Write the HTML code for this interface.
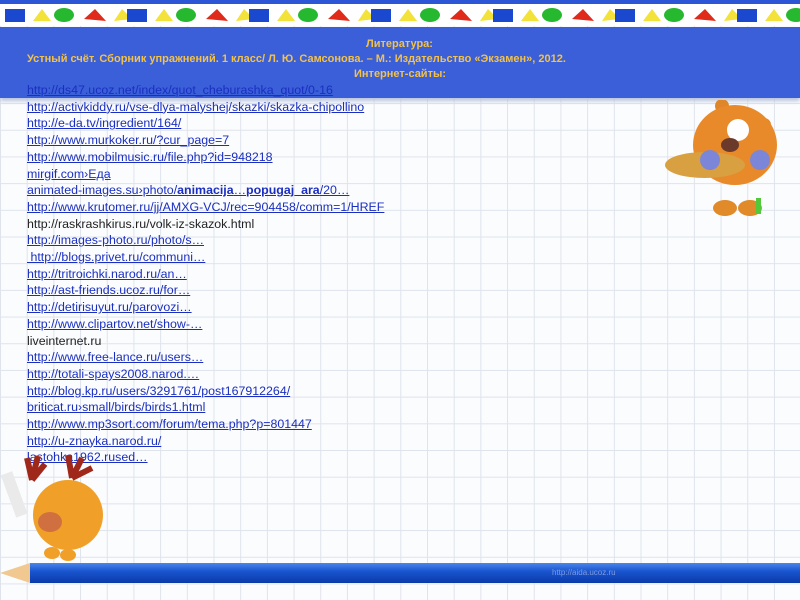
<!DOCTYPE html>
<html><head><meta charset="utf-8"><style>
body{margin:0;width:800px;height:600px;overflow:hidden;position:relative;font-family:"Liberation Sans",sans-serif;
background-color:#fbfcfe;
background-image:linear-gradient(to right,#dfe3ec 1px,transparent 1px),linear-gradient(to bottom,#dfe3ec 1px,transparent 1px);
background-size:26.7px 26.7px;background-position:0 23px;}
.top{position:absolute;left:0;top:0;width:800px;height:4px;background:#2c56d6}
.band{position:absolute;left:0;top:4px;width:800px;height:22px;background:#fff}
.hdr{position:absolute;left:0;top:27px;width:800px;height:71px;background:#3a5fd9;box-shadow:0 3px 4px #b8c3dc}
.t{position:absolute;color:#f2c24a;font-weight:bold;font-size:11px;font-family:"Liberation Sans Narrow","Liberation Sans",sans-serif;white-space:nowrap}
.links{position:absolute;left:27px;top:82px;font-size:12.4px;line-height:16.7px;color:#1a2fc0;white-space:nowrap}
.links div{text-decoration:underline}
.links .p{text-decoration:none;color:#222}
.pencil{position:absolute;left:30px;top:563px;width:770px;height:20px;background:linear-gradient(#4a86ea,#1a56d0 40%,#0a3aa8);}
.tip{position:absolute;left:0;top:563px;width:0;height:0;border-top:10px solid transparent;border-bottom:10px solid transparent;border-right:30px solid #f0c890}
</style></head><body>
<div class="top"></div>
<div class="band">
<svg width="800" height="22">
<g id="s">
<rect x="5" y="5" width="20" height="13" fill="#1a49d0"/>
<polygon points="33,17 42,5 51,17" fill="#f2e23a"/>
<ellipse cx="64" cy="11" rx="10" ry="7" fill="#26b82e"/>
<polygon points="84,15 95,5 106,17" fill="#e02a1a"/>
<polygon points="114,17 122,5 132,15" fill="#f2e23a"/>
</g>
<use href="#s" x="122"/><use href="#s" x="244"/><use href="#s" x="366"/><use href="#s" x="488"/><use href="#s" x="610"/><use href="#s" x="732"/>
</svg></div>
<div class="hdr"></div>
<div class="t" style="left:366px;top:38px">Литература:</div>
<div class="t" style="left:27px;top:53px">Устный счёт. Сборник упражнений. 1 класс/ Л. Ю. Самсонова. – М.: Издательство «Экзамен», 2012.</div>
<div class="t" style="left:354px;top:68px">Интернет-сайты:</div>
<div class="links">
<div>http://ds47.ucoz.net/index/quot_cheburashka_quot/0-16</div>
<div>http://activkiddy.ru/vse-dlya-malyshej/skazki/skazka-chipollino</div>
<div>http://e-da.tv/ingredient/164/</div>
<div>http://www.murkoker.ru/?cur_page=7</div>
<div>http://www.mobilmusic.ru/file.php?id=948218</div>
<div>mirgif.com›Еда</div>
<div>animated-images.su›photo/<b>animacija</b>…<b>popugaj_ara</b>/20…</div>
<div>http://www.krutomer.ru/jj/AMXG-VCJ/rec=904458/comm=1/HREF</div>
<div class="p">http://raskrashkirus.ru/volk-iz-skazok.html</div>
<div>http://images-photo.ru/photo/s…</div>
<div>&nbsp;http://blogs.privet.ru/communi…</div>
<div>http://tritroichki.narod.ru/an…</div>
<div>http://ast-friends.ucoz.ru/for…</div>
<div>http://detirisuyut.ru/parovozi…</div>
<div>http://www.clipartov.net/show-…</div>
<div class="p">liveinternet.ru</div>
<div>http://www.free-lance.ru/users…</div>
<div>http://totali-spays2008.narod.…</div>
<div>http://blog.kp.ru/users/3291761/post167912264/</div>
<div>briticat.ru›small/birds/birds1.html</div>
<div>http://www.mp3sort.com/forum/tema.php?p=801447</div>
<div>http://u-znayka.narod.ru/</div>
<div>lastohka1962.rused…</div>
</div>
<svg style="position:absolute;left:660px;top:100px" width="130" height="125">
<circle cx="62" cy="6" r="7" fill="#e0862a"/>
<circle cx="104" cy="25" r="7" fill="#e0862a"/>
<ellipse cx="75" cy="45" rx="42" ry="40" fill="#e88a2a"/>
<ellipse cx="45" cy="65" rx="40" ry="13" fill="#d8a040"/>
<circle cx="78" cy="30" r="11" fill="#fff"/>
<ellipse cx="70" cy="45" rx="9" ry="7" fill="#6c3a2a"/>
<circle cx="50" cy="60" r="10" fill="#7b86d8"/><circle cx="100" cy="60" r="10" fill="#7b86d8"/>
<ellipse cx="65" cy="108" rx="12" ry="8" fill="#e08a2a"/><ellipse cx="90" cy="108" rx="12" ry="8" fill="#e08a2a"/>
<rect x="96" y="98" width="5" height="16" fill="#52c83a"/>
</svg>
<svg style="position:absolute;left:0;top:450px" width="110" height="115">
<path d="M32 30 L27 8 M32 30 L38 6 M32 30 L45 14 M72 28 L68 5 M72 28 L82 8 M72 28 L92 18" stroke="#a0281a" stroke-width="6" fill="none"/>
<ellipse cx="68" cy="65" rx="35" ry="35" fill="#f0a028"/>
<ellipse cx="50" cy="72" rx="12" ry="10" fill="#d07040"/>
<rect x="8" y="22" width="12" height="45" fill="#eaeaea" transform="rotate(-20 14 44)"/>
<ellipse cx="52" cy="103" rx="8" ry="6" fill="#f0a028"/><ellipse cx="68" cy="105" rx="8" ry="6" fill="#f0a028"/>
</svg>
<div class="tip"></div>
<div class="pencil"></div>
<div style="position:absolute;left:552px;top:568px;font-size:8px;color:#7d9be0">http://aida.ucoz.ru</div>
</body></html>
